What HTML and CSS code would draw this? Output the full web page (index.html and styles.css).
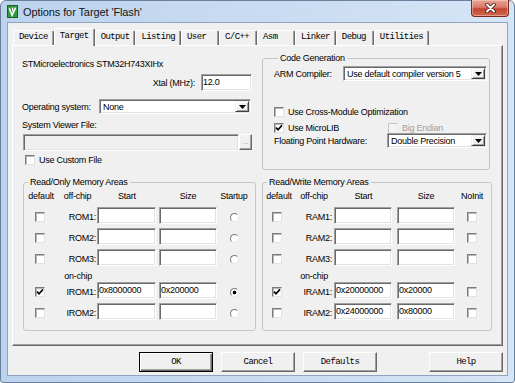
FILE: index.html
```html
<!DOCTYPE html>
<html>
<head>
<meta charset="utf-8">
<link rel="stylesheet" href="styles.css">
</head>
<body>
<div class="window">
  <div class="titlebar">
    <svg class="app-icon" width="11" height="13" viewBox="0 0 11 13">
      <rect x="0.5" y="0.5" width="10" height="12" fill="#2e9a3a" stroke="#1a5e22"/>
      <path d="M2.3 3 L5 10.2 L8.7 2.6" stroke="#fff" stroke-width="1.6" fill="none"/>
      <path d="M5.6 2.6 L5.6 6" stroke="#fff" stroke-width="1.2" fill="none"/>
    </svg>
    <span class="title">Options for Target 'Flash'</span>
    <div class="close">
      <svg width="13" height="10" viewBox="0 0 13 10">
        <path d="M3 1.5 L10 8.5 M10 1.5 L3 8.5" stroke="#4a130c" stroke-width="3.6" stroke-linecap="round" fill="none"/>
        <path d="M3 1.5 L10 8.5 M10 1.5 L3 8.5" stroke="#fff" stroke-width="2" stroke-linecap="round" fill="none"/>
      </svg>
    </div>
  </div>
  <div class="client">
    <div class="tabs">
      <div class="tab">Device</div>
      <div class="tab active">Target</div>
      <div class="tab">Output</div>
      <div class="tab">Listing</div>
      <div class="tab">User</div>
      <div class="tab">C/C++</div>
      <div class="tab">Asm</div>
      <div class="tab">Linker</div>
      <div class="tab">Debug</div>
      <div class="tab">Utilities</div>
    </div>
    <div class="panel">
      <div class="left">
        <div class="device">STMicroelectronics STM32H743XIHx</div>
        <div class="xtal">
          <span class="xtal-label">Xtal (MHz):</span>
          <div class="field xtal-field">12.0</div>
        </div>
        <div class="os">
          <span class="os-label">Operating system:</span>
          <div class="select os-select"><span class="val">None</span><span class="arrow"><svg width="7" height="4" viewBox="0 0 7 4"><polygon points="0,0 7,0 3.5,4" fill="#000"/></svg></span></div>
        </div>
        <div class="svf-label">System Viewer File:</div>
        <div class="svf">
          <div class="field disabled svf-field"></div>
          <div class="browse">...</div>
        </div>
        <div class="check-row custom">
          <span class="cb"></span><span class="cb-text">Use Custom File</span>
        </div>
      </div>

      <fieldset class="group codegen">
        <legend>Code Generation</legend>
        <div class="cg-row">
          <span class="cg-label">ARM Compiler:</span>
          <div class="select cg-select"><span class="val">Use default compiler version 5</span><span class="arrow"><svg width="7" height="4" viewBox="0 0 7 4"><polygon points="0,0 7,0 3.5,4" fill="#000"/></svg></span></div>
        </div>
        <div class="check-row cross">
          <span class="cb"></span><span class="cb-text">Use Cross-Module Optimization</span>
        </div>
        <div class="check-row micro">
          <span class="pair">
            <span class="cb"><svg width="8" height="8" viewBox="0 0 8 8"><path d="M1 3.6 L3 5.8 L7 1.4" stroke="#000" stroke-width="1.6" fill="none"/></svg></span><span class="cb-text">Use MicroLIB</span>
          </span>
          <span class="cb off"></span><span class="cb-text grey">Big Endian</span>
        </div>
        <div class="fph-row">
          <span class="fph-label">Floating Point Hardware:</span>
          <div class="select fph-select"><span class="val">Double Precision</span><span class="arrow"><svg width="7" height="4" viewBox="0 0 7 4"><polygon points="0,0 7,0 3.5,4" fill="#000"/></svg></span></div>
        </div>
      </fieldset>

      <fieldset class="group mem ro">
        <legend>Read/Only Memory Areas</legend>
        <div class="mem-grid">
          <div class="hd c1">default</div><div class="hd">off-chip</div><div class="hd">Start</div><div class="hd">Size</div><div class="hd">Startup</div>

          <span class="cb c1"></span><div class="lbl">ROM1:</div><div class="field start"></div><div class="field size"></div><span class="radio"></span>
          <span class="cb c1"></span><div class="lbl">ROM2:</div><div class="field start"></div><div class="field size"></div><span class="radio"></span>
          <span class="cb c1"></span><div class="lbl">ROM3:</div><div class="field start"></div><div class="field size"></div><span class="radio"></span>
          <div class="c1"></div><div class="onchip">on-chip</div>
          <span class="cb c1"><svg width="8" height="8" viewBox="0 0 8 8"><path d="M1 3.6 L3 5.8 L7 1.4" stroke="#000" stroke-width="1.6" fill="none"/></svg></span><div class="lbl">IROM1:</div><div class="field start">0x8000000</div><div class="field size">0x200000</div><span class="radio on"></span>
          <span class="cb c1"></span><div class="lbl">IROM2:</div><div class="field start"></div><div class="field size"></div><span class="radio"></span>
        </div>
      </fieldset>

      <fieldset class="group mem rw">
        <legend>Read/Write Memory Areas</legend>
        <div class="mem-grid">
          <div class="hd c1">default</div><div class="hd">off-chip</div><div class="hd">Start</div><div class="hd">Size</div><div class="hd">NoInit</div>

          <span class="cb c1"></span><div class="lbl">RAM1:</div><div class="field start"></div><div class="field size"></div><span class="cb ni"></span>
          <span class="cb c1"></span><div class="lbl">RAM2:</div><div class="field start"></div><div class="field size"></div><span class="cb ni"></span>
          <span class="cb c1"></span><div class="lbl">RAM3:</div><div class="field start"></div><div class="field size"></div><span class="cb ni"></span>
          <div class="c1"></div><div class="onchip">on-chip</div>
          <span class="cb c1"><svg width="8" height="8" viewBox="0 0 8 8"><path d="M1 3.6 L3 5.8 L7 1.4" stroke="#000" stroke-width="1.6" fill="none"/></svg></span><div class="lbl">IRAM1:</div><div class="field start">0x20000000</div><div class="field size">0x20000</div><span class="cb ni"></span>
          <span class="cb c1"></span><div class="lbl">IRAM2:</div><div class="field start">0x24000000</div><div class="field size">0x80000</div><span class="cb ni"></span>
        </div>
      </fieldset>
    </div>
    <div class="buttons">
      <div class="btn default">OK</div>
      <div class="btn">Cancel</div>
      <div class="btn">Defaults</div>
      <div class="btn help">Help</div>
    </div>
  </div>
</div>
</body>
</html>
```

FILE: styles.css
```css
* { box-sizing: border-box; }
html, body { margin: 0; padding: 0; }
body {
  width: 515px;
  height: 383px;
  overflow: hidden;
  background: #fff;
  font-family: "Liberation Sans", Arial, sans-serif;
  font-size: 9px;
  letter-spacing: -0.25px;
  color: #000;
}

.window {
  width: 515px;
  height: 383px;
  display: flex;
  flex-direction: column;
  padding: 0 6px 6px;
  border: 1px solid #6b809c;
  border-radius: 6px 6px 3px 3px;
  background: linear-gradient(90deg, #bcd3ee 0%, #cadcf2 55%, #d6e5f6 100%);
}

.titlebar {
  flex: none;
  height: 21px;
  display: flex;
  align-items: center;
}
.app-icon { flex: none; }
.title {
  margin-left: 5px;
  font-size: 11px;
  letter-spacing: -0.1px;
  color: #141414;
}
.close {
  align-self: flex-start;
  margin: -1px -1px 0 auto;
  width: 38px;
  height: 17px;
  border: 1px solid #7a2a1f;
  border-top: 0;
  border-radius: 0 0 4px 4px;
  background: linear-gradient(180deg, #e8a596 0%, #d97a69 45%, #c4452f 55%, #cf6a52 100%);
  box-shadow: inset 0 0 0 1px rgba(255, 220, 210, 0.45);
  display: flex;
  align-items: center;
  justify-content: center;
}

.client {
  flex: 1;
  display: flex;
  flex-direction: column;
  background: #f0f0f0;
  border: 1px solid #8ea4c0;
}

/* tabs */
.tabs {
  flex: none;
  display: flex;
  align-items: flex-end;
  height: 17px;
  margin-top: 5px;
  padding-left: 5px;
}
.tab {
  height: 15px;
  min-width: 38px;
  padding: 0 5px;
  font-family: "Liberation Mono", "Courier New", monospace;
  font-size: 9px;
  letter-spacing: -0.6px;
  line-height: 13px;
  background: #f0f0f0;
  border: 1px solid;
  border-bottom: 0;
  border-color: #fff #696969 transparent #fff;
  border-radius: 2px 2px 0 0;
  box-shadow: inset -1px 0 #a0a0a0;
}
.tab.active {
  height: 18px;
  margin-bottom: -1px;
  line-height: 14px;
  position: relative;
  z-index: 1;
}

/* panel */
.panel {
  flex: none;
  height: 301px;
  margin: 0 4px;
  border: 1px solid;
  border-color: #fff #696969 #696969 #fff;
  box-shadow: inset -1px -1px #a0a0a0;
  padding: 6px 0 0 8px;
  display: grid;
  grid-template-columns: 235px 230px;
  grid-template-rows: 118px 155px;
  column-gap: 6px;
  row-gap: 6px;
  align-content: start;
}

/* left column */
.left {
  display: flex;
  flex-direction: column;
  padding: 0 4px 0 1px;
}
.device { margin-top: 6px; line-height: 12px; }
.xtal {
  margin-top: 5px;
  height: 15px;
  display: flex;
  justify-content: flex-end;
  align-items: center;
}
.xtal-label { margin-right: 6px; }
.xtal-field { width: 51px; height: 15px; padding-top: 1px; }
.os {
  margin-top: 9px;
  height: 15px;
  display: flex;
  align-items: center;
}
.os-label { width: 77px; flex: none; }
.os-select { width: 152px; }
.svf-label { margin-top: 5px; line-height: 12px; }
.svf {
  margin-top: 3px;
  height: 16px;
  display: flex;
  padding-left: 1px;
}
.svf-field { width: 216px; height: 16px; }
.browse {
  width: 13px;
  height: 16px;
  background: #f0f0f0;
  border: 1px solid;
  border-color: #fff #696969 #696969 #fff;
  box-shadow: inset -1px -1px #a0a0a0;
  color: #a0a0a0;
  font-size: 8px;
  line-height: 14px;
  text-align: center;
}

.check-row {
  display: flex;
  align-items: center;
  height: 10px;
}
.custom { margin-top: 5px; padding-left: 3px; }
.cb-text { margin-left: 4px; line-height: 12px; white-space: nowrap; }
.grey { color: #a0a0a0; }

/* common controls */
.field {
  height: 17px;
  background: #fff;
  border: 1px solid;
  border-color: #a0a0a0 #fff #fff #a0a0a0;
  box-shadow: inset 1px 1px #696969, inset -1px -1px #e3e3e3;
  padding: 0 0 0 1px;
  line-height: 14px;
  white-space: nowrap;
  overflow: hidden;
}
.field.disabled { background: #f0f0f0; }

.select {
  height: 15px;
  display: flex;
  background: #fff;
  border: 1px solid;
  border-color: #a0a0a0 #fff #fff #a0a0a0;
  box-shadow: inset 1px 1px #696969, inset -1px -1px #e3e3e3;
  padding: 1px;
}
.select .val {
  flex: 1;
  padding: 0 0 0 2px;
  line-height: 12px;
  white-space: nowrap;
  overflow: hidden;
}
.select .arrow {
  flex: none;
  width: 14px;
  background: #f0f0f0;
  border: 1px solid;
  border-color: #f0f0f0 #404040 #404040 #f0f0f0;
  box-shadow: inset 1px 1px #fff, inset -1px -1px #a0a0a0;
  display: flex;
  align-items: center;
  justify-content: center;
}

.cb {
  flex: none;
  width: 10px;
  height: 10px;
  background: #fff;
  border: 1px solid;
  border-color: #7b7b7b #e2e2e2 #e2e2e2 #7b7b7b;
  box-shadow: inset 1px 1px #b8b8b8;
  display: flex;
  align-items: center;
  justify-content: center;
}
.cb.off {
  background: #f4f4f4;
  border-color: #c4c4c4 #ececec #ececec #c4c4c4;
  box-shadow: none;
}
.radio {
  width: 9px;
  height: 9px;
  border-radius: 50%;
  background: #fff;
  border: 1px solid;
  border-color: #7b7b7b #e6e6e6 #e6e6e6 #7b7b7b;
}
.radio.on {
  background: radial-gradient(circle, #000 0, #000 1.5px, #fff 2.2px);
}

/* group boxes */
.group {
  margin: 0;
  padding: 0;
  min-width: 0;
  border: 1px solid #c6c6c6;
  border-radius: 3px;
}
.group legend {
  margin-left: 4px;
  padding: 0 2px;
  line-height: 12px;
}

.codegen { margin-right: 2px; padding: 2px 2px 0 11px; }
.cg-row { height: 15px; display: flex; align-items: center; }
.cg-label { width: 69px; flex: none; }
.cg-select { width: 144px; }
.cross { margin-top: 26px; }
.micro { margin-top: 6px; }
.pair { width: 114px; flex: none; display: flex; align-items: center; }
.fph-row { height: 15px; display: flex; align-items: center; }
.fph-label { width: 113px; flex: none; }
.fph-select { width: 100px; }

/* memory areas */
.mem { padding: 2px 0 0 0; }
.ro { margin-left: 2px; }
.mem-grid {
  display: grid;
  grid-template-rows: 13px 17px 17px 17px 8px 17px 17px;
  row-gap: 4px;
  align-items: start;
}
.ro .mem-grid { grid-template-columns: 34px 39px 60px 62px 30px; }
.rw .mem-grid { grid-template-columns: 32px 38px 61px 64px 28px; }
.c1 { grid-column: 1; }
.hd { text-align: center; line-height: 12px; white-space: nowrap; }
.lbl { text-align: right; padding: 4px 1px 0 0; line-height: 12px; white-space: nowrap; }
.onchip { text-align: right; padding-right: 5px; line-height: 12px; white-space: nowrap; }
.mem-grid .cb.c1 { margin-top: 5px; justify-self: start; }
.ro .mem-grid .cb.c1 { margin-left: 11px; }
.rw .mem-grid .cb.c1 { margin-left: 9px; }
.mem-grid .cb.ni { margin-top: 5px; justify-self: center; }
.mem-grid .radio { margin-top: 6px; justify-self: center; }
.ro .start { width: 59px; }
.ro .size { width: 58px; margin-left: 2px; }
.rw .start { width: 58px; margin-left: 1px; }
.rw .size { width: 58px; margin-left: 3px; }

/* bottom buttons */
.buttons {
  flex: none;
  display: flex;
  gap: 8px;
  margin-top: 6px;
  padding: 0 4px 0 131px;
}
.btn {
  width: 74px;
  height: 20px;
  font-family: "Liberation Mono", "Courier New", monospace;
  font-size: 9px;
  letter-spacing: -0.6px;
  background: #f0f0f0;
  border: 1px solid;
  border-color: #fff #696969 #696969 #fff;
  box-shadow: inset -1px -1px #a0a0a0;
  display: flex;
  align-items: center;
  justify-content: center;
}
.btn.default {
  border-color: #000;
  box-shadow: inset 1px 1px #fff, inset -1px -1px #696969, inset -2px -2px #a0a0a0;
}
.btn.help { margin-left: auto; }
```
